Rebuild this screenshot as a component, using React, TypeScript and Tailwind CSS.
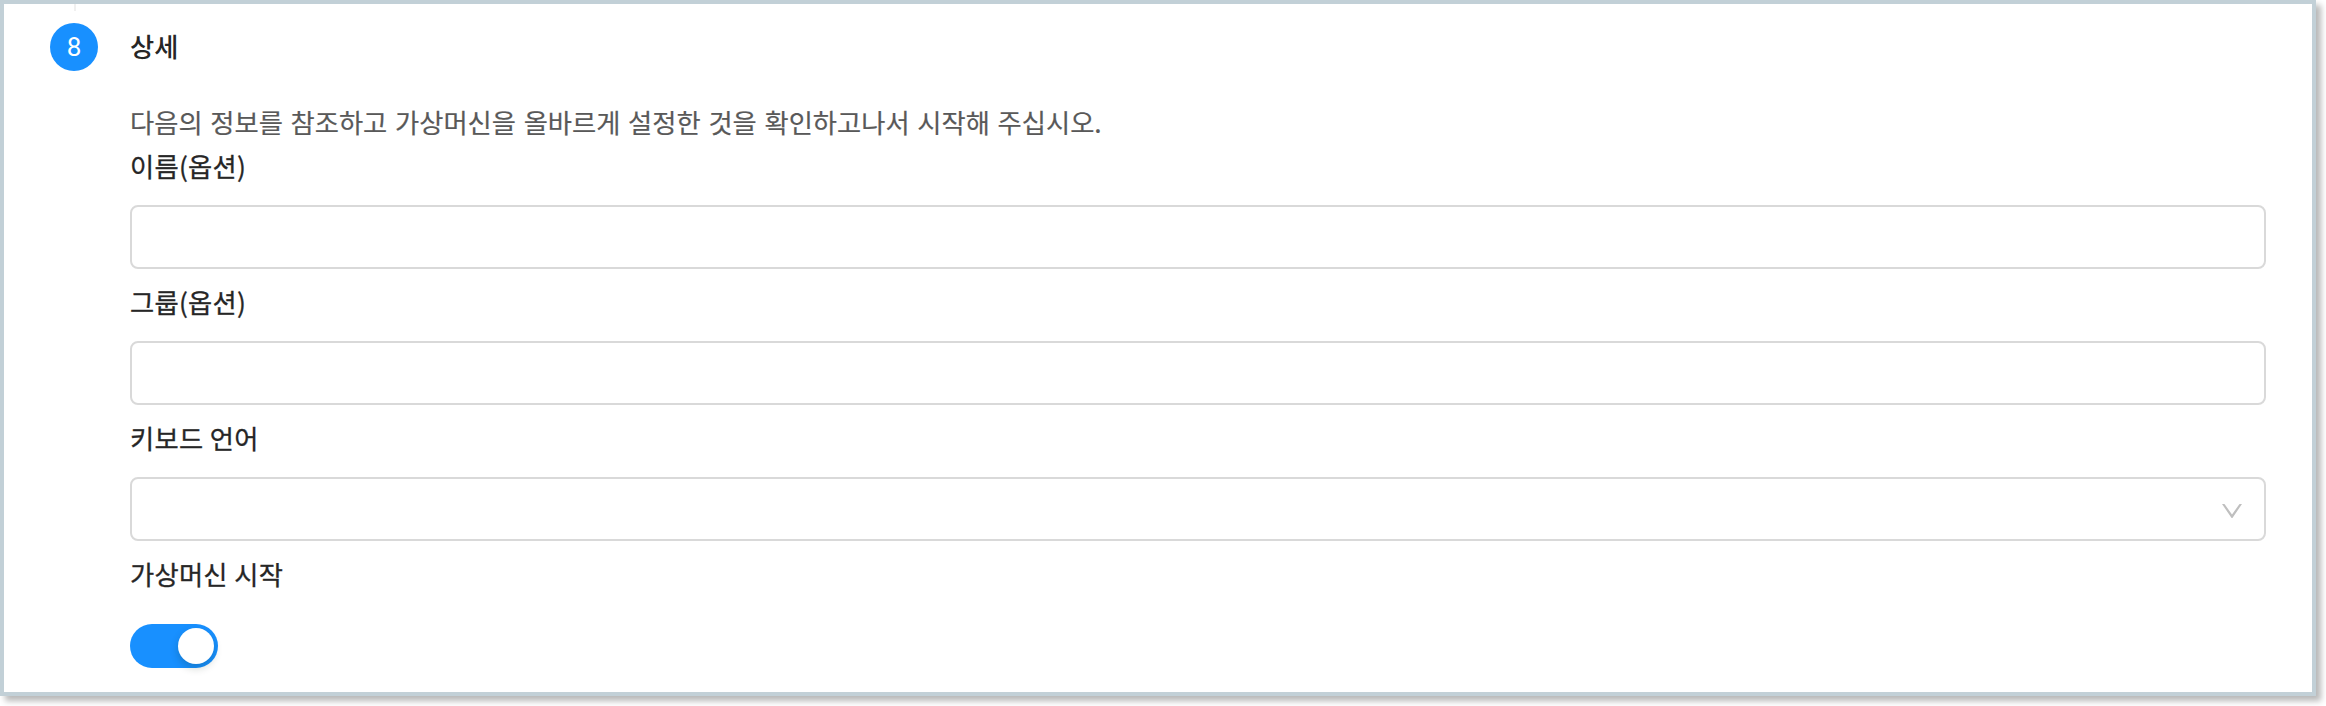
import type { ReactNode } from "react";

function Field({ label, children }: { label: string; children: ReactNode }) {
  return (
    <div className="flex flex-col">
      <div className="flex h-[72px] items-start pt-[11px] leading-[44px] tracking-[0.25px] [word-spacing:0.4px] [-webkit-text-stroke:0.3px_#262626]">{label}</div>
      {children}
    </div>
  );
}

function TextBox() {
  return (
    <input
      type="text"
      className="block h-16 w-full rounded-lg border-2 border-[#d9d9d9] bg-white px-[22px] outline-none"
    />
  );
}

function SelectBox() {
  return (
    <button
      type="button"
      className="flex h-16 w-full items-center justify-end rounded-lg border-2 border-[#d9d9d9] bg-white pr-[22px]"
    >
      <svg className="mt-1 h-[14px] w-5" viewBox="0 0 20 14" fill="#bfbfbf">
        <path d="M0 0H2.1Q2.5 0 2.7 .3L10 10.5L17.3 .3Q17.5 0 17.9 0H20L10.8 13.4Q10 14.4 9.2 13.4Z" />
      </svg>
    </button>
  );
}

export default function App() {
  return (
    <div className="h-[706px] w-full bg-white pr-[10px] pb-[10px] font-['Noto_Sans_CJK_KR',sans-serif] text-[26.3px] text-[#262626]">
      <section className="flex h-[696px] border-4 border-[#c2d0d7] bg-white pr-[46px] pl-[46px] shadow-[5px_5px_6px_rgba(0,0,0,0.28)]">
        <div className="flex w-12 shrink-0 flex-col items-center">
          <div className="ml-[2px] h-[7px] w-[2px] bg-[#f0f0f0]" />
          <div className="mt-3 flex h-12 w-12 items-center justify-center rounded-full bg-[#1890ff] font-['Roboto',sans-serif] text-[26px] leading-none text-white">
            8
          </div>
        </div>
        <div className="ml-8 flex grow flex-col">
          <h2 className="mt-[18px] h-12 leading-[48px] font-medium">상세</h2>
          <p className="mt-[30px] h-[44px] leading-[44px] text-[#595959] [word-spacing:1.8px] [-webkit-text-stroke:0.2px_#595959]">
            다음의 정보를 참조하고 가상머신을 올바르게 설정한 것을 확인하고나서 시작해 주십시오.
          </p>
          <div className="-mt-[11px] flex flex-col">
            <Field label="이름(옵션)"><TextBox /></Field>
            <Field label="그룹(옵션)"><TextBox /></Field>
            <Field label="키보드 언어"><SelectBox /></Field>
            <Field label="가상머신 시작">
              <button
                type="button"
                role="switch"
                aria-checked="true"
                className="mt-[11px] flex h-11 w-[88px] items-center justify-end rounded-full bg-[#1890ff] pr-1"
              >
                <span className="h-9 w-9 rounded-full bg-white shadow-[0_4px_8px_rgba(0,35,11,0.2)]" />
              </button>
            </Field>
          </div>
        </div>
      </section>
    </div>
  );
}
